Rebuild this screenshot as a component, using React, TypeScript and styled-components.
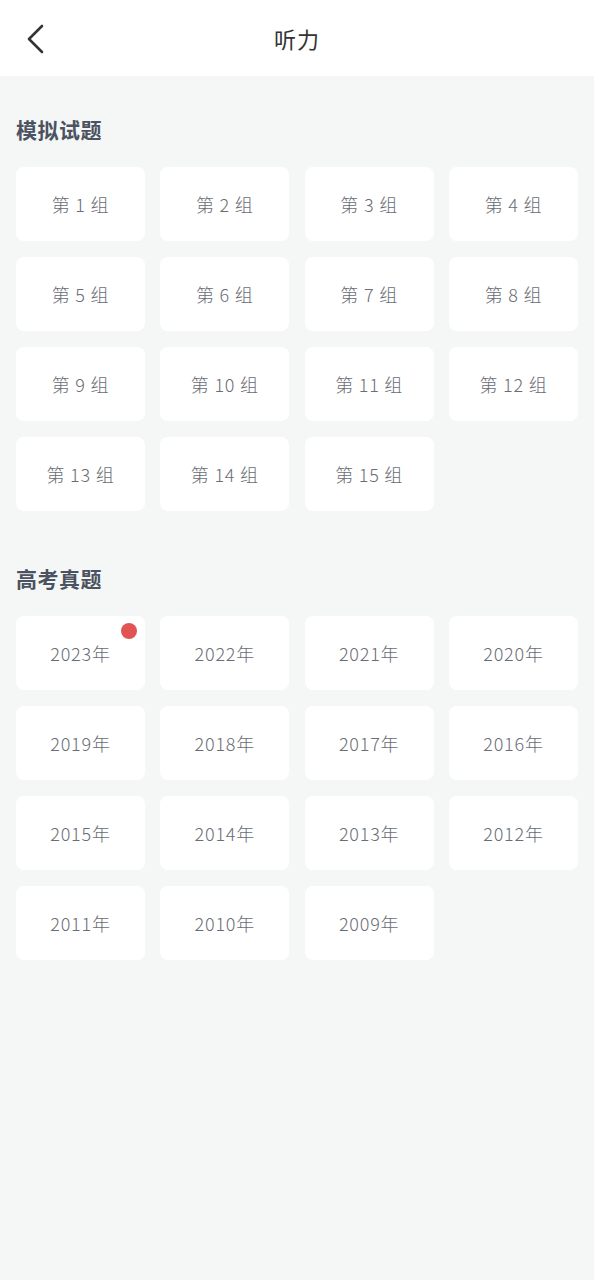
import React from "react"
import styled, { createGlobalStyle } from "styled-components"

const GlobalStyle = createGlobalStyle`
  html, body {
    margin: 0;
    padding: 0;
    background: #f5f7f7;
  }
  body {
    font-family: "Noto Sans CJK SC", "Noto Sans", sans-serif;
  }
`

const mockGroups = Array.from({ length: 15 }, (_, i) => `第 ${i + 1} 组`)
const years = Array.from({ length: 15 }, (_, i) => `${2023 - i}年`)

export default function App() {
  return (
    <>
      <GlobalStyle />
      <Page>
        <Header>
          <BackButton aria-label="返回">
            <svg width="24" height="32" viewBox="0 0 24 32" fill="none">
              <path
                d="M17 3 L4 16 L17 29"
                stroke="#333"
                strokeWidth="2.6"
                strokeLinecap="round"
                strokeLinejoin="round"
              />
            </svg>
          </BackButton>
          <HeaderTitle>听力</HeaderTitle>
        </Header>

        <Section>
          <SectionTitle>模拟试题</SectionTitle>
          <Grid>
            {mockGroups.map((label) => (
              <Card key={label}>{label}</Card>
            ))}
          </Grid>
        </Section>

        <Section>
          <SectionTitle>高考真题</SectionTitle>
          <Grid>
            {years.map((label, i) => (
              <Card key={label}>
                {label}
                {i === 0 && <Dot />}
              </Card>
            ))}
          </Grid>
        </Section>
      </Page>
    </>
  )
}

const Page = styled.div`
  min-height: 1280px;
  background: #f5f7f7;
`

const Header = styled.div`
  position: relative;
  height: 76px;
  background: #ffffff;
  display: flex;
  align-items: center;
  justify-content: center;
`

const BackButton = styled.div`
  position: absolute;
  left: 25px;
  top: 23px;
  width: 24px;
  height: 32px;
  cursor: pointer;
`

const HeaderTitle = styled.div`
  font-size: 22px;
  color: #333333;
  letter-spacing: 1px;
`

const Section = styled.div`
  padding: 39px 16px 0;

  & + & {
    padding-top: 53px;
  }
`

const SectionTitle = styled.div`
  font-size: 21px;
  font-weight: bold;
  color: #4b5260;
  line-height: 28px;
  letter-spacing: 0.5px;
  margin-bottom: 24px;
`

const Grid = styled.div`
  display: grid;
  grid-template-columns: repeat(4, 1fr);
  column-gap: 15.3px;
  row-gap: 16px;
`

const Card = styled.div`
  position: relative;
  height: 74px;
  background: #ffffff;
  border-radius: 8px;
  display: flex;
  align-items: center;
  justify-content: center;
  font-size: 18px;
  font-weight: 300;
  letter-spacing: 0.8px;
  color: #696d74;
`

const Dot = styled.span`
  position: absolute;
  top: 7px;
  right: 8px;
  width: 16px;
  height: 16px;
  border-radius: 50%;
  background: #e25453;
`
